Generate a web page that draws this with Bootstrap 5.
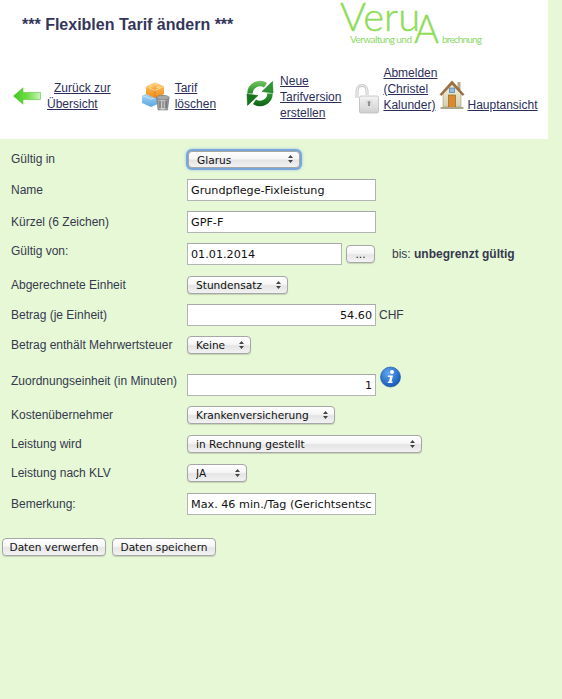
<!DOCTYPE html>
<html lang="de">
<head>
  <meta charset="UTF-8" />
  <meta name="viewport" content="width=device-width, initial-scale=1.0"/>
  <title>Flexiblen Tarif ändern</title>
  <link href="https://cdn.jsdelivr.net/npm/bootstrap@5.3.3/dist/css/bootstrap.min.css" rel="stylesheet">
  <style>
    html, body { height: 100%; }
    body { background: #e6f8d5; color: #36384f; font: 12px/16px "Liberation Sans", Arial, sans-serif; overflow: hidden; }
    a { color: #2b2e5a; }

    .page-head { width: 548px; height: 139px; background: #fff; position: relative; }
    .page-title { font: bold 16px/20px "Liberation Sans", Arial, sans-serif; color: #33365a; margin: 0; padding: 15px 0 0 22px; height: 65px; }
    .verua-logo { position: absolute; left: 335px; top: 0; overflow: visible; }

    .tool-bar { padding-left: 13px; height: 56px; }
    .tool-item { white-space: nowrap; }
    .tool-back { margin-bottom: 9px; }
    .tool-back svg { margin-right: 6px; }
    .tool-back .first-line { padding-left: 7px; }
    .tool-delete { margin: 0 0 9px 30px; }
    .tool-delete svg { margin-right: 5px; }
    .tool-new { margin-left: 30px; }
    .tool-new svg { margin: 0 6px 8px 0; }
    .tool-logout { margin: 0 0 8px 13px; height: 48px; align-self: flex-start; }
    .tool-logout svg { margin: 0 4px -1px 0; }
    .tool-home { margin: 0 0 8px 2px; }
    .tool-home svg { margin: 0 2px 3px 0; }

    .edit-form { padding-top: 5px; }
    .form-line { display: flex; align-items: center; height: 30px; padding-left: 11px; }
    .form-line.line-high { height: 32px; }
    .form-line.line-thin { height: 28px; }
    .form-line.line-tall { height: 40px; padding-top: 10px; }
    .line-label { width: 176px; flex: none; }
    .label-up { margin-top: -8px; }
    .label-mid { margin-top: -6px; }

    .plain-input { height: 22px; border: 1px solid #b4b4b4; border-top-color: #a8a8a8; background: #fff; font: 11.2px/20px "DejaVu Sans", Verdana, sans-serif; color: #111; padding: 0 3px; border-radius: 0; outline: 0; }
    .w-wide { width: 189px; }
    .w-date { width: 155px; }
    .text-end-in { text-align: right; }

    .aqua-select { appearance: none; -webkit-appearance: none; height: 18px; border: 1px solid #a6a6a6; border-radius: 4px; font: 10.6px/16px "DejaVu Sans", Verdana, sans-serif; color: #111; padding: 0 16px 0 8px; background-color: #f4f4f4;
      background-image: url("data:image/svg+xml,%3Csvg xmlns='http://www.w3.org/2000/svg' width='7' height='10'%3E%3Cpath d='M3.500 1 6 4H1zM3.500 9 1 6h5z' fill='%23444'/%3E%3C/svg%3E"), linear-gradient(#fff, #f6f6f6 45%, #e4e4e4 55%, #f2f2f2);
      background-repeat: no-repeat; background-position: right 5px center, 0 0; box-shadow: 0 1px 1px rgba(0,0,0,.15); }
    .aqua-select.has-focus { box-shadow: 0 0 0 2px #7aa7d9, 0 0 3px 2px #9cc0e6; width: 112px; height: 17px; margin-left: 1px; }
    .sel-unit { width: 101px; }
    .sel-vat { width: 64px; }
    .sel-payer { width: 148px; }
    .sel-bill { width: 235px; }
    .sel-klv { width: 60px; }

    .aqua-btn { height: 18px; border: 1px solid #a6a6a6; border-radius: 4px; font: 10.6px/14px "DejaVu Sans", Verdana, sans-serif; color: #111; padding: 0; width: 104px; background: linear-gradient(#fff, #f6f6f6 45%, #e6e6e6 55%, #f4f4f4); box-shadow: 0 1px 1px rgba(0,0,0,.15); white-space: nowrap; }
    .aqua-btn.date-btn { width: 29px; margin-left: 4px; }
    .until-text { margin-left: 17px; }
    .chf-text { margin-left: 3px; }
    .info-icon { margin: -17px 0 0 4px; }
    .action-row { padding: 18px 0 0 2px; }
    .action-row .aqua-btn + .aqua-btn { margin-left: 6px; }
  </style>
</head>
<body>

<div class="page-head">
  <h1 class="page-title">*** Flexiblen Tarif ändern ***</h1>

  <svg class="verua-logo" width="155" height="50" viewBox="0 0 155 50" font-family="Lato, 'Open Sans', sans-serif" fill="#8edc58">
    <text x="5" y="31" font-size="39" font-weight="300" stroke="#8edc58" stroke-width=".4" textLength="80" lengthAdjust="spacingAndGlyphs">Veru</text>
    <text x="15" y="43" font-size="10" fill="#8ed868" textLength="62">Verwaltung und</text>
    <text x="79" y="43" font-size="40" font-weight="300" stroke="#8edc58" stroke-width=".4" textLength="25" lengthAdjust="spacingAndGlyphs">A</text>
    <text x="107" y="43" font-size="10" fill="#8ed868" textLength="40">brechnung</text>
  </svg>

  <nav class="tool-bar d-flex align-items-end">
    <div class="tool-item tool-back d-flex align-items-center">
      <svg width="28" height="18" viewBox="0 0 28 18">
        <defs><linearGradient id="arrowFill" x1="0" x2="1" y1="0" y2="0"><stop offset="0" stop-color="#3fc61c"/><stop offset=".55" stop-color="#74e04c"/><stop offset="1" stop-color="#cdf3bb"/></linearGradient></defs>
        <path d="M0.500 9 10 .8V5.500H27.500V12.500H10V17.200Z" fill="url(#arrowFill)" stroke="#52c634" stroke-width=".6"/>
      </svg>
      <div><a href="#" class="first-line">Zurück zur</a><br><a href="#">Übersicht</a></div>
    </div>

    <div class="tool-item tool-delete d-flex align-items-center">
      <svg width="29" height="30" viewBox="0 0 29 30">
        <defs>
          <linearGradient id="orangeFill" x1="0" x2="0" y1="0" y2="1"><stop offset="0" stop-color="#ffc264"/><stop offset="1" stop-color="#ee8e1d"/></linearGradient>
          <linearGradient id="blueFill" x1="0" x2="0" y1="0" y2="1"><stop offset="0" stop-color="#b5dcf7"/><stop offset="1" stop-color="#5ba6e0"/></linearGradient>
          <linearGradient id="canFill" x1="0" x2="1" y1="0" y2="0"><stop offset="0" stop-color="#8b8b8b"/><stop offset=".5" stop-color="#d8d8d8"/><stop offset="1" stop-color="#7b7b7b"/></linearGradient>
        </defs>
        <path d="M20 13l5 2v4h-7z" fill="#6fbb3d"/>
        <path d="M1 14.500 10 11l9 3.500V22l-9 4-9-4z" fill="url(#blueFill)"/>
        <path d="M1 14.500 10 18l9-3.500" fill="none" stroke="#d6ecfb" stroke-width=".8"/>
        <path d="M5 5.500 14 1.500l9 4v7.500l-9 4-9-4z" fill="url(#orangeFill)"/>
        <path d="M5 5.500 14 9.500l9-4" fill="none" stroke="#ffdc9c" stroke-width=".8"/>
        <path d="M14 9.500V17" stroke="#d67a15" stroke-width=".7"/>
        <ellipse cx="10" cy="5.200" rx="2.400" ry="1.200" fill="#ffd184"/>
        <ellipse cx="15" cy="3.400" rx="2.400" ry="1.200" fill="#ffd184"/>
        <ellipse cx="18" cy="6" rx="2.400" ry="1.200" fill="#ffd184"/>
        <path d="M15.500 16.500h12.500l-1.500 12.500h-9.500z" fill="url(#canFill)" stroke="#666" stroke-width=".5"/>
        <ellipse cx="21.800" cy="16.500" rx="6.500" ry="2.200" fill="#a8a8a8" stroke="#6a6a6a" stroke-width=".5"/>
        <path d="M19 20v7M22 20v7M25 20v7" stroke="#555" stroke-width=".9"/>
      </svg>
      <div><a href="#">Tarif</a><br><a href="#">löschen</a></div>
    </div>

    <div class="tool-item tool-new d-flex align-items-center">
      <svg width="28" height="29" viewBox="0 0 28 29">
        <defs>
          <linearGradient id="ringTop" gradientUnits="userSpaceOnUse" x1="0" x2="0" y1="1" y2="15"><stop offset="0" stop-color="#7cc964"/><stop offset="1" stop-color="#1d8a25"/></linearGradient>
          <linearGradient id="ringLow" gradientUnits="userSpaceOnUse" x1="0" x2="0" y1="14" y2="28"><stop offset="0" stop-color="#2f9a33"/><stop offset="1" stop-color="#0b5f15"/></linearGradient>
        </defs>
        <path d="M4 14.500A10 10 0 0 1 19.500 6.200" fill="none" stroke="url(#ringTop)" stroke-width="5.500"/>
        <path d="M27 14 26.500 2.500 16 12.500Z" fill="#2c9430" stroke="#0f6a18" stroke-width=".5"/>
        <path d="M24 14.500A10 10 0 0 1 8.500 22.800" fill="none" stroke="url(#ringLow)" stroke-width="5.500"/>
        <path d="M1 15 1.500 26.500 12 16.500Z" fill="#17741d" stroke="#0b5a14" stroke-width=".5"/>
      </svg>
      <div><a href="#">Neue</a><br><a href="#">Tarifversion</a><br><a href="#">erstellen</a></div>
    </div>

    <div class="tool-item tool-logout d-flex align-items-end">
      <svg width="25" height="30" viewBox="0 0 25 30">
        <defs><linearGradient id="lockFill" x1="0" x2="0" y1="0" y2="1"><stop offset="0" stop-color="#f4f4f4"/><stop offset="1" stop-color="#cfcfcf"/></linearGradient></defs>
        <path d="M3 14V7C3 3.500 5.500 1.500 8 1.500S13 3.500 13 7V11" fill="none" stroke="#c2c2c2" stroke-width="3"/>
        <path d="M3 14V7C3 3.500 5.500 1.500 8 1.500S13 3.500 13 7V11" fill="none" stroke="#f6f6f6" stroke-width="1.200"/>
        <rect x="5.500" y="12" width="19" height="17" rx="1.500" fill="url(#lockFill)" stroke="#bdbdbd" stroke-width=".8"/>
        <rect x="11.500" y="16" width="7" height="8" fill="#dedede"/>
        <circle cx="15" cy="18.500" r="1.300" fill="#8a8a8a"/>
        <path d="M14.400 19h1.200l.5 3h-2.200z" fill="#8a8a8a"/>
      </svg>
      <div><a href="#">Abmelden</a><br><a href="#">(Christel</a><br><a href="#">Kalunder)</a></div>
    </div>

    <div class="tool-item tool-home d-flex align-items-end">
      <svg width="26" height="30" viewBox="0 0 26 30">
        <defs><linearGradient id="wallFill" x1="0" x2="0" y1="0" y2="1"><stop offset="0" stop-color="#f6f3de"/><stop offset="1" stop-color="#d3ceae"/></linearGradient></defs>
        <rect x="18.500" y="2" width="3" height="8" fill="#b9a98a"/>
        <path d="M4 13 13 4l9 9V27H4Z" fill="url(#wallFill)" stroke="#8f8a70" stroke-width=".5"/>
        <path d="M.8 14.500 13 .8 25.200 14.500 23.500 15.500 13 4.500 2.500 15.500Z" fill="#a0703f" stroke="#7a5228" stroke-width=".4"/>
        <rect x="10.500" y="8" width="5" height="4.500" fill="#8fc0e6" stroke="#4d7ba6" stroke-width=".7"/>
        <rect x="9.500" y="15" width="7" height="12.500" fill="#d98a2b" stroke="#8c5a1a" stroke-width=".6"/>
        <path d="M1.500 27h23v2h-23z" fill="#a9a68c"/>
      </svg>
      <div><a href="#">Hauptansicht</a></div>
    </div>
  </nav>
</div>

<form class="edit-form">
  <div class="form-line">
    <div class="line-label">Gültig in</div>
    <select class="aqua-select has-focus"><option>Glarus</option></select>
  </div>
  <div class="form-line line-high">
    <div class="line-label">Name</div>
    <input class="plain-input w-wide" type="text" value="Grundpflege-Fixleistung">
  </div>
  <div class="form-line line-high">
    <div class="line-label">Kürzel (6 Zeichen)</div>
    <input class="plain-input w-wide" type="text" value="GPF-F">
  </div>
  <div class="form-line line-high">
    <div class="line-label label-mid">Gültig von:</div>
    <input class="plain-input w-date" type="text" value="01.01.2014">
    <button class="aqua-btn date-btn" type="button">...</button>
    <span class="until-text">bis: <b>unbegrenzt gültig</b></span>
  </div>
  <div class="form-line">
    <div class="line-label">Abgerechnete Einheit</div>
    <select class="aqua-select sel-unit"><option>Stundensatz</option></select>
  </div>
  <div class="form-line">
    <div class="line-label">Betrag (je Einheit)</div>
    <input class="plain-input w-wide text-end-in" type="text" value="54.60">
    <span class="chf-text">CHF</span>
  </div>
  <div class="form-line">
    <div class="line-label">Betrag enthält Mehrwertsteuer</div>
    <select class="aqua-select sel-vat"><option>Keine</option></select>
  </div>
  <div class="form-line line-tall">
    <div class="line-label label-up">Zuordnungseinheit (in Minuten)</div>
    <input class="plain-input w-wide text-end-in" type="text" value="1">
    <svg class="info-icon" width="21" height="22" viewBox="0 0 21 22">
      <defs><radialGradient id="infoFill" cx=".4" cy=".3" r=".8"><stop offset="0" stop-color="#5fa8f0"/><stop offset="1" stop-color="#0d4fb0"/></radialGradient></defs>
      <circle cx="10.500" cy="11" r="10" fill="url(#infoFill)" stroke="#154f9c" stroke-width=".6"/>
      <circle cx="12" cy="6" r="2" fill="#fff"/>
      <path d="M8 9.500h5L11.500 15.500h1.200L12.300 17H7.500L8 15.500h1L10 11H7.700Z" fill="#fff"/>
    </svg>
  </div>
  <div class="form-line">
    <div class="line-label">Kostenübernehmer</div>
    <select class="aqua-select sel-payer"><option>Krankenversicherung</option></select>
  </div>
  <div class="form-line line-thin">
    <div class="line-label">Leistung wird</div>
    <select class="aqua-select sel-bill"><option>in Rechnung gestellt</option></select>
  </div>
  <div class="form-line">
    <div class="line-label">Leistung nach KLV</div>
    <select class="aqua-select sel-klv"><option>JA</option></select>
  </div>
  <div class="form-line line-high">
    <div class="line-label">Bemerkung:</div>
    <input class="plain-input w-wide" type="text" value="Max. 46 min./Tag (Gerichtsentscheid)">
  </div>
  <div class="action-row d-flex">
    <button class="aqua-btn" type="button">Daten verwerfen</button>
    <button class="aqua-btn" type="button">Daten speichern</button>
  </div>
</form>

<script src="https://cdn.jsdelivr.net/npm/bootstrap@5.3.3/dist/js/bootstrap.bundle.min.js"></script>
</body>
</html>
